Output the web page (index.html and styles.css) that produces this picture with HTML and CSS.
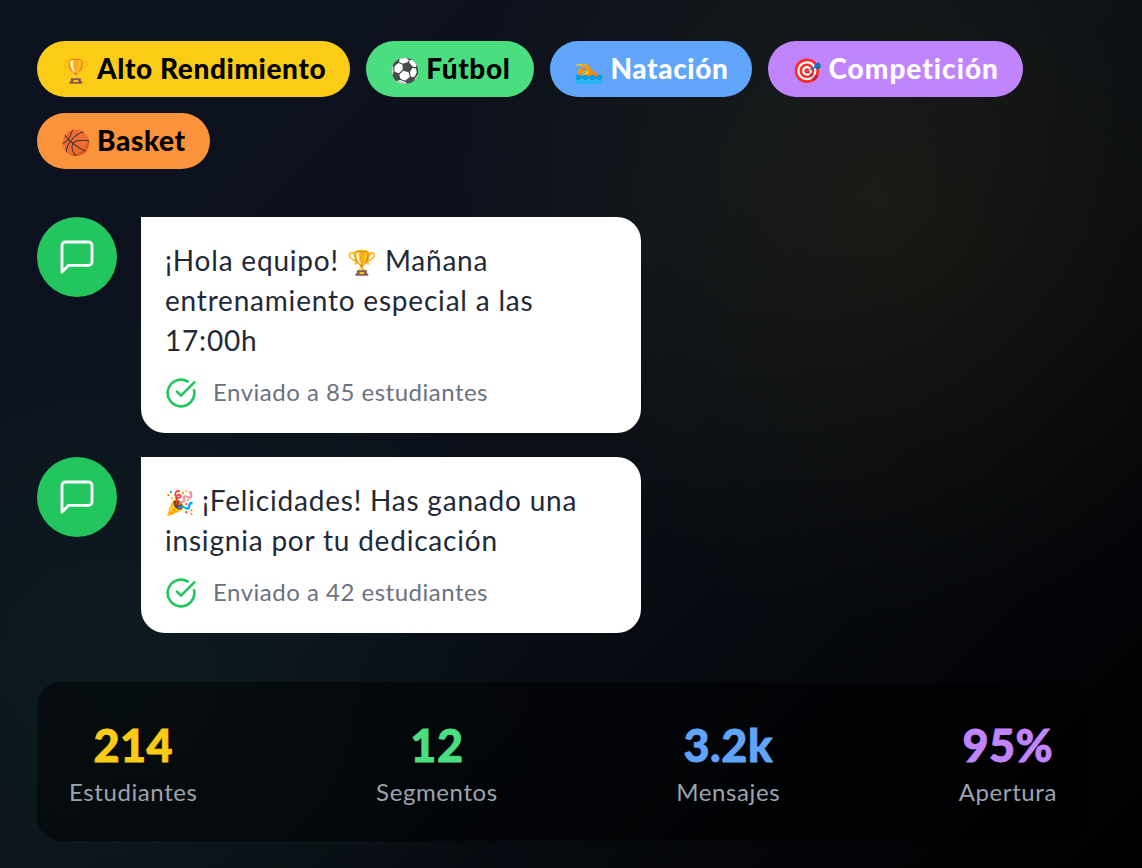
FILE: index.html
```html
<!DOCTYPE html>
<html lang="es">
<head>
    <meta charset="UTF-8">
    <title>Mensajes</title>
    <link rel="stylesheet" href="styles.css">
</head>
<body>
    <div class="wrap">
        <div class="tags">
            <span class="tag yellow"><span class="emoji">🏆</span>Alto Rendimiento</span>
            <span class="tag green"><span class="emoji">⚽</span>Fútbol</span>
            <span class="tag blue"><span class="emoji">🏊</span>Natación</span>
            <span class="tag purple"><span class="emoji">🎯</span>Competición</span>
            <span class="tag orange"><span class="emoji">🏀</span>Basket</span>
        </div>
        <div class="msgs">
            <div class="msg">
                <div class="avatar">
                    <svg width="40" height="40" viewBox="0 0 24 24" fill="none" stroke="#fff" stroke-width="1.7" stroke-linejoin="round"><path d="M21 15a2 2 0 0 1-2 2H7l-4 4V5a2 2 0 0 1 2-2h14a2 2 0 0 1 2 2z"/></svg>
                </div>
                <div class="bubble">
                    <p>¡Hola equipo!<span class="inline-emoji mid">🏆</span>Mañana<br>entrenamiento especial a las<br>17:00h</p>
                    <div class="sent">
                        <svg width="32" height="32" viewBox="0 0 24 24" fill="none" stroke="#22c55e" stroke-width="2" stroke-linecap="round" stroke-linejoin="round"><path d="M21.8 10A10 10 0 1 1 17 3.34"/><path d="m9 11 3 3L22 4"/></svg>
                        <span>Enviado a 85 estudiantes</span>
                    </div>
                </div>
            </div>
            <div class="msg">
                <div class="avatar">
                    <svg width="40" height="40" viewBox="0 0 24 24" fill="none" stroke="#fff" stroke-width="1.7" stroke-linejoin="round"><path d="M21 15a2 2 0 0 1-2 2H7l-4 4V5a2 2 0 0 1 2-2h14a2 2 0 0 1 2 2z"/></svg>
                </div>
                <div class="bubble">
                    <p><span class="inline-emoji first">🎉</span>¡Felicidades! Has ganado una<br>insignia por tu dedicación</p>
                    <div class="sent">
                        <svg width="32" height="32" viewBox="0 0 24 24" fill="none" stroke="#22c55e" stroke-width="2" stroke-linecap="round" stroke-linejoin="round"><path d="M21.8 10A10 10 0 1 1 17 3.34"/><path d="m9 11 3 3L22 4"/></svg>
                        <span>Enviado a 42 estudiantes</span>
                    </div>
                </div>
            </div>
        </div>
        <div class="stats">
            <div class="stat"><b class="c-yellow">214</b><span>Estudiantes</span></div>
            <div class="stat"><b class="c-green">12</b><span>Segmentos</span></div>
            <div class="stat"><b class="c-blue">3.2k</b><span>Mensajes</span></div>
            <div class="stat"><b class="c-purple">95%</b><span>Apertura</span></div>
        </div>
    </div>
</body>
</html>
```

FILE: styles.css
```css
html, body{
    height: 100%;
}
body{
    margin: 0;
    overflow: hidden;
    font-family: "Lato", "Noto Sans", sans-serif;
    background-color: #000;
    background-image:
        radial-gradient(circle at 880px 200px, rgba(250, 204, 21, 0.07) 0, rgba(250, 204, 21, 0.045) 170px, rgba(250, 204, 21, 0) 430px),
        radial-gradient(circle at 120px 680px, rgba(34, 197, 94, 0.06) 0, rgba(34, 197, 94, 0) 430px),
        linear-gradient(135deg, #0c1220 0, #0b101a 45%, #000 100%);
}
.wrap{
    width: 1052px;
    padding: 41px 0 0 37px;
}
.tags{
    display: flex;
    flex-wrap: wrap;
    gap: 16px;
}
.tag{
    height: 56px;
    line-height: 54px;
    padding: 0 24px;
    border-radius: 28px;
    font-size: 28px;
    font-weight: 900;
    letter-spacing: 0.6px;
    color: #000;
    box-sizing: border-box;
}
.emoji{
    display: inline-block;
    width: 36px;
    font-size: 24px;
    line-height: 0;
    letter-spacing: 0;
}
.inline-emoji{
    display: inline-block;
    font-size: 24px;
    line-height: 24px;
    letter-spacing: 0;
}
.mid{
    margin: 0 8px;
}
.first{
    margin-right: 7px;
}
.yellow{ background-color: #facc15; }
.green{ background-color: #4ade80; }
.blue{ background-color: #60a5fa; color: #fff; }
.purple{ background-color: #c084fc; color: #fff; letter-spacing: 1px; }
.orange{ background-color: #fb923c; }
.msgs{
    margin-top: 48px;
    display: flex;
    flex-direction: column;
    gap: 24px;
}
.msg{
    display: flex;
    gap: 24px;
    align-items: flex-start;
}
.avatar{
    width: 80px;
    height: 80px;
    border-radius: 50%;
    background-color: #22c55e;
    display: flex;
    align-items: center;
    justify-content: center;
}
.bubble{
    width: 500px;
    box-sizing: border-box;
    padding: 24px;
    background-color: #fff;
    border-radius: 0 24px 24px 24px;
}
.bubble p{
    margin: -1px 0 0;
    font-size: 28px;
    line-height: 40px;
    letter-spacing: 0.8px;
    color: #1f2937;
}
.sent{
    display: flex;
    align-items: center;
    gap: 16px;
    margin-top: 17px;
    color: #6b7280;
    font-size: 24px;
    line-height: 32px;
    letter-spacing: 0.5px;
}
.sent span{
    margin-top: -2px;
}
.stats{
    margin-top: 49px;
    display: flex;
    justify-content: space-between;
    padding: 33px 32px;
    border-radius: 24px;
    background-color: rgba(0, 0, 0, 0.5);
}
.stat{
    display: flex;
    flex-direction: column;
    align-items: center;
}
.stat b{
    font-size: 45px;
    line-height: 61px;
    font-weight: 900;
    letter-spacing: 0.5px;
    -webkit-text-stroke: 0.8px currentColor;
}
.stat span{
    font-size: 24px;
    line-height: 32px;
    letter-spacing: 0.6px;
    color: #9ca3af;
}
.c-yellow{ color: #facc15; }
.c-green{ color: #4ade80; }
.c-blue{ color: #60a5fa; }
.c-purple{ color: #c084fc; }
```
